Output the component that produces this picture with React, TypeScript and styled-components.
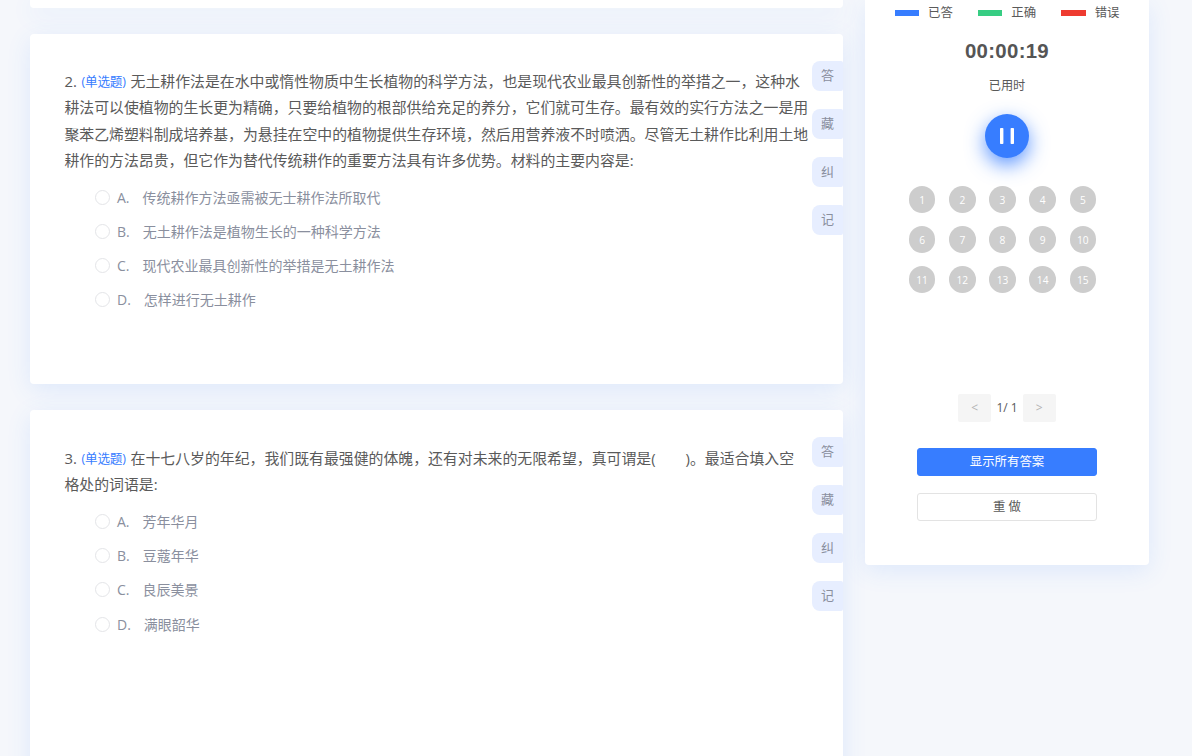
import React from "react";
import styled, { createGlobalStyle } from "styled-components";

const Global = createGlobalStyle`
  * { box-sizing: border-box; }
  html, body { margin: 0; height: 756px; overflow: hidden; background: #f5f7fb; }
  body { font-family: "Open Sans", "Noto Sans CJK SC", sans-serif; color: #5a5a5a; }
`;

const Page = styled.div`
  display: flex;
  align-items: flex-start;
  gap: 22px;
  width: 1192px;
  height: 756px;
  padding-left: 30px;
  overflow: hidden;
`;

const Panel = styled.section`
  background: #fff;
  border-radius: 4px;
  box-shadow: 0 6px 24px rgba(55, 135, 255, 0.12);
`;

const Questions = styled.main`
  display: flex;
  flex-direction: column;
  gap: 26px;
  width: 813px;
  flex: none;
`;

const PreviousCard = styled(Panel)`
  height: 8px;
  border-radius: 0 0 4px 4px;
`;

const Card = styled(Panel)<{ $height: number }>`
  display: flex;
  justify-content: space-between;
  height: ${(p) => p.$height}px;
`;

const Content = styled.div<{ $top: number }>`
  padding: ${(p) => p.$top}px 0 0 34.5px;
  white-space: nowrap;
`;

const Stem = styled.div`
  font-size: 14.88px;
  line-height: 26.3px;
`;

const Kind = styled.span`
  margin: 0 1px 0 0.7px;
  font-size: 12.6px;
  letter-spacing: -0.2px;
  line-height: 1;
  vertical-align: 1px;
  color: #377dff;
`;

const Blank = styled.span`
  display: inline-block;
  width: 30px;
`;

const Options = styled.ul`
  list-style: none;
  margin: 7.5px 0 0;
  padding: 0 0 0 30.5px;
`;

const Option = styled.li`
  display: flex;
  align-items: center;
  height: 34.15px;
  font-size: 14px;
  line-height: 34px;
  color: #8a8f9e;
`;

const Radio = styled.span`
  width: 15px;
  height: 15px;
  margin: 0 7px 1px 0;
  border: 1px solid #e4e5e8;
  border-radius: 50%;
`;

const Letter = styled.span`
  margin-right: 13px;
`;

const Tools = styled.div`
  display: flex;
  flex-direction: column;
  gap: 18px;
  width: 31px;
  padding-top: 26.5px;
`;

const Tool = styled.button`
  height: 30.1px;
  padding: 0 0 2px;
  border: 0;
  border-radius: 8px 2px 2px 8px;
  background: #e7eeff;
  color: #8a8f9e;
  font: inherit;
  font-size: 13px;
  line-height: 28px;
`;

const Sidebar = styled(Panel)`
  display: flex;
  flex-direction: column;
  align-items: center;
  width: 284px;
  height: 565px;
  border-radius: 0 0 4px 4px;
`;

const Legend = styled.div`
  display: flex;
  gap: 25px;
  height: 24px;
  padding-top: 1px;
`;

const LegendItem = styled.div<{ $color: string }>`
  display: flex;
  align-items: center;
  gap: 9px;
  font-size: 12.4px;
  line-height: 24px;
  &::before {
    content: "";
    width: 24.5px;
    height: 6px;
    background: ${(p) => p.$color};
  }
`;

const Clock = styled.div`
  margin-top: 12px;
  font: bold 20.4px/30px "Liberation Sans", Arial, sans-serif;
  letter-spacing: 0.3px;
  color: #555;
`;

const ClockLabel = styled.div`
  margin-top: 8px;
  font-size: 12.2px;
  line-height: 24px;
`;

const Pause = styled.button`
  display: flex;
  align-items: center;
  justify-content: center;
  width: 44px;
  height: 44px;
  margin-top: 15.5px;
  padding: 0;
  border: 0;
  border-radius: 50%;
  background: #377dff;
  box-shadow: 0 7px 19px rgba(55, 125, 255, 0.8);
`;

const Numbers = styled.div`
  display: grid;
  grid-template-columns: repeat(5, 26.5px);
  gap: 13.7px;
  margin: 28.5px 9px 0 0;
`;

const NumberDot = styled.span`
  height: 26.5px;
  border-radius: 50%;
  background: #cdcdcd;
  color: #fff;
  font-size: 10.2px;
  line-height: 28px;
  text-align: center;
`;

const Pager = styled.div`
  display: flex;
  align-items: center;
  gap: 5px;
  margin-top: 101px;
  font-size: 12px;
  line-height: 28px;
`;

const PageButton = styled.button`
  width: 33.3px;
  height: 28px;
  padding: 0;
  border: 0;
  border-radius: 2px;
  background: #f5f5f5;
  color: #b3b3b3;
  font: inherit;
`;

const Action = styled.button<{ $primary?: boolean }>`
  width: 180px;
  height: 28px;
  margin-top: ${(p) => (p.$primary ? 26 : 17.2)}px;
  padding: 0;
  border: 1px solid ${(p) => (p.$primary ? "#377dff" : "#e3e3e3")};
  border-radius: 3px;
  background: ${(p) => (p.$primary ? "#377dff" : "#fff")};
  color: ${(p) => (p.$primary ? "#fff" : "#5a5a5a")};
  font: inherit;
  font-size: 12.4px;
  line-height: 26px;
`;

type QuestionProps = {
  no: number;
  height: number;
  top: number;
  options: string[];
  children: React.ReactNode;
};

function Question({ no, height, top, options, children }: QuestionProps) {
  return (
    <Card $height={height}>
      <Content $top={top}>
        <Stem>
          {no}. <Kind>(单选题)</Kind> {children}
        </Stem>
        <Options>
          {options.map((text, i) => (
            <Option key={text}>
              <Radio />
              <Letter>{"ABCD"[i]}.</Letter>
              {text}
            </Option>
          ))}
        </Options>
      </Content>
      <Tools>
        {["答", "藏", "纠", "记"].map((t) => (
          <Tool key={t}>{t}</Tool>
        ))}
      </Tools>
    </Card>
  );
}

export default function App() {
  return (
    <Page>
      <Global />
      <Questions>
        <PreviousCard />
        <Question
          no={2}
          height={350}
          top={34}
          options={[
            "传统耕作方法亟需被无士耕作法所取代",
            "无土耕作法是植物生长的一种科学方法",
            "现代农业最具创新性的举措是无土耕作法",
            "怎样进行无土耕作",
          ]}
        >
          无土耕作法是在水中或惰性物质中生长植物的科学方法，也是现代农业最具创新性的举措之一，这种水
          <br />
          耕法可以使植物的生长更为精确，只要给植物的根部供给充足的养分，它们就可生存。最有效的实行方法之一是用
          <br />
          聚苯乙烯塑料制成培养基，为悬挂在空中的植物提供生存环境，然后用营养液不时喷洒。尽管无土耕作比利用土地
          <br />
          耕作的方法昂贵，但它作为替代传统耕作的重要方法具有许多优势。材料的主要内容是:
        </Question>
        <Question
          no={3}
          height={400}
          top={35}
          options={["芳年华月", "豆蔻年华", "良辰美景", "满眼韶华"]}
        >
          在十七八岁的年纪，我们既有最强健的体魄，还有对未来的无限希望，真可谓是(
          <Blank />
          )。最适合填入空
          <br />
          格处的词语是:
        </Question>
      </Questions>
      <Sidebar>
        <Legend>
          <LegendItem $color="#377dff">已答</LegendItem>
          <LegendItem $color="#37cd83">正确</LegendItem>
          <LegendItem $color="#ee3b30">错误</LegendItem>
        </Legend>
        <Clock>00:00:19</Clock>
        <ClockLabel>已用时</ClockLabel>
        <Pause aria-label="暂停">
          <svg width="16" height="18" viewBox="0 0 16 18" fill="#fff">
            <rect x="1" y="1" width="3.4" height="16" rx="0.8" />
            <rect x="11.6" y="1" width="3.4" height="16" rx="0.8" />
          </svg>
        </Pause>
        <Numbers>
          {Array.from({ length: 15 }, (_, i) => (
            <NumberDot key={i}>{i + 1}</NumberDot>
          ))}
        </Numbers>
        <Pager>
          <PageButton>&lt;</PageButton>
          <span>1/ 1</span>
          <PageButton>&gt;</PageButton>
        </Pager>
        <Action $primary>显示所有答案</Action>
        <Action>重 做</Action>
      </Sidebar>
    </Page>
  );
}
